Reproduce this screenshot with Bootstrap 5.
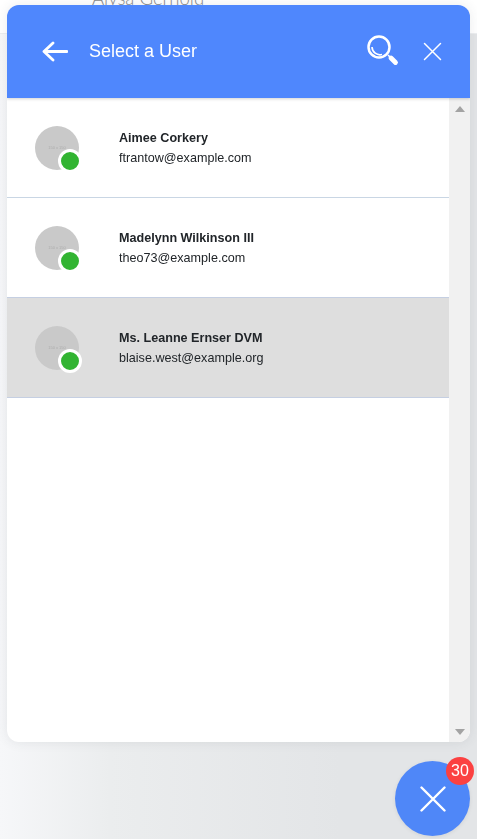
<!DOCTYPE html>
<html lang="en">
<head>
<meta charset="utf-8">
<title>Select a User</title>
<link href="https://cdn.jsdelivr.net/npm/bootstrap@5.3.0/dist/css/bootstrap.min.css" rel="stylesheet">
<style>
html,body{height:100%;}
body{margin:0;overflow:hidden;background:#fff;font-family:"Liberation Sans",Arial,sans-serif;}
.back-top{height:34px;background:#fff;border-bottom:1px solid #eceef0;overflow:hidden;padding-left:92px;}
.back-name{font-family:Lato,sans-serif;font-weight:300;font-size:18.6px;line-height:20px;margin-top:-12px;color:#8a8a8a;}
.back-fill{height:805px;background:linear-gradient(90deg,#f6f7f9 0,#ebedee 110px,#e3e5e7 340px,#e3e5e7 100%);}
.chat-panel{position:fixed;left:7px;top:5px;width:463px;height:737px;background:#fff;border-radius:12px;box-shadow:0 0 12px rgba(60,70,80,.1);overflow:hidden;}
.panel-head{height:93px;background:#4f87fd;color:#fff;padding:0 28px 0 35px;box-shadow:0 1px 3px rgba(0,0,0,.18);position:relative;z-index:1;}
.head-title{font-size:18px;margin-left:21px;line-height:24px;margin-top:-2px;}
.panel-head svg{margin-top:-1px;}
.panel-body{height:644px;}
.user-list{width:442px;}
.user-row{height:100px;border-bottom:1px solid #c9d6e4;padding-left:28px;}
.user-row.is-active{background:#dedede;border-bottom-color:#c5cfe2;border-top:1px solid #c5cfe2;margin-top:-1px;height:101px;}
.user-ava{width:44px;height:44px;border-radius:50%;background:#c9c9c9;position:relative;flex:none;color:#adadad;font-size:4px;text-align:center;line-height:44px;}
.user-dot{position:absolute;left:23px;top:23px;width:24px;height:24px;border-radius:50%;background:#32b432;border:3.5px solid #fff;}
.user-text{margin-left:40px;color:#212529;font-size:12.6px;line-height:20px;}
.user-name{font-weight:700;}
.fake-bar{width:21px;background:#f1f1f1;position:relative;}
.arrow-up,.arrow-dn{width:0;height:0;border-left:5px solid transparent;border-right:5px solid transparent;margin:0 auto;}
.arrow-up{border-bottom:6px solid #a3a3a3;margin-top:8px;}
.arrow-dn{border-top:6px solid #a3a3a3;margin-bottom:7px;}
.fab{position:fixed;left:395px;top:761px;width:75px;height:75px;border-radius:50%;background:#4f87f8;box-shadow:0 1px 4px rgba(0,0,0,.08);}
.fab-count{position:absolute;left:51px;top:-4px;width:28px;height:28px;border-radius:50%;background:#fb4141;color:#fff;font-size:16px;line-height:28px;text-align:center;}
</style>
</head>
<body>
<div class="back-top"><div class="back-name">Alysa Gerhold</div></div>
<div class="back-fill"></div>

<div class="chat-panel d-flex flex-column">
  <div class="panel-head d-flex align-items-center">
    <svg width="26" height="21" viewBox="0 0 26 21" fill="none" stroke="#fff" stroke-width="2.8" stroke-linecap="round" stroke-linejoin="round"><path d="M2 10.5H25M11 2L2 10.5L11 19"/></svg>
    <div class="head-title flex-grow-1">Select a User</div>
    <svg width="32" height="32" viewBox="0 0 32 32" fill="none" stroke="#fff" style="margin-right:24px"><circle cx="12" cy="12" r="10.5" stroke-width="2.5"/><path d="M5 12a8 8 0 0 0 10 7.5" stroke-width="1.7"/><path d="M21 20L29 28" stroke-width="1.6"/><path d="M24 23L28.5 27.5" stroke-width="4.8" stroke-linecap="round"/></svg>
    <svg width="19" height="19" viewBox="0 0 19 19" fill="none" stroke="#fff" stroke-width="1.5" stroke-linecap="round"><path d="M1.5 1.5L17.5 17.5M17.5 1.5L1.5 17.5"/></svg>
  </div>
  <div class="panel-body d-flex">
    <div class="user-list">
      <div class="user-row d-flex align-items-center">
        <div class="user-ava">150 x 150<span class="user-dot"></span></div>
        <div class="user-text"><div class="user-name">Aimee Corkery</div><div>ftrantow@example.com</div></div>
      </div>
      <div class="user-row d-flex align-items-center">
        <div class="user-ava">150 x 150<span class="user-dot"></span></div>
        <div class="user-text"><div class="user-name">Madelynn Wilkinson III</div><div>theo73@example.com</div></div>
      </div>
      <div class="user-row is-active d-flex align-items-center">
        <div class="user-ava">150 x 150<span class="user-dot"></span></div>
        <div class="user-text"><div class="user-name">Ms. Leanne Ernser DVM</div><div>blaise.west@example.org</div></div>
      </div>
    </div>
    <div class="fake-bar d-flex flex-column justify-content-between">
      <div class="arrow-up"></div>
      <div class="arrow-dn"></div>
    </div>
  </div>
</div>

<div class="fab d-flex align-items-center justify-content-center">
  <svg width="26" height="26" viewBox="0 0 26 26" fill="none" stroke="#fff" stroke-width="2.4" stroke-linecap="round"><path d="M1.5 1.5L24.5 24.5M24.5 1.5L1.5 24.5"/></svg>
  <span class="fab-count">30</span>
</div>
<script src="https://cdn.jsdelivr.net/npm/bootstrap@5.3.0/dist/js/bootstrap.bundle.min.js"></script>
</body>
</html>
